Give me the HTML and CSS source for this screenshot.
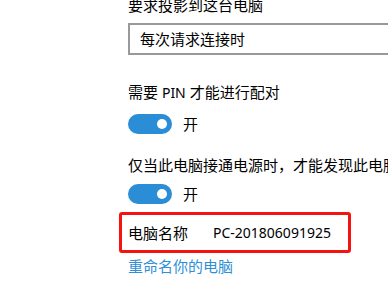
FILE: index.html
```html
<!DOCTYPE html>
<html lang="zh-CN">
<head>
    <meta charset="UTF-8">
    <meta name="viewport" content="width=device-width, initial-scale=1.0">
    <title>投影到此电脑</title>
    <link rel="stylesheet" href="styles.css">
</head>
<body>

<div class="settings">
    <div class="label title">要求投影到这台电脑</div>
    <div class="select">每次请求连接时</div>

    <div class="label pinLabel">需要 <span class="latin">PIN</span> 才能进行配对</div>
    <div class="toggleRow">
        <div class="toggle"><span class="knob"></span></div>
        <div class="state">开</div>
    </div>

    <div class="label powerLabel">仅当此电脑接通电源时，才能发现此电脑</div>
    <div class="toggleRow">
        <div class="toggle"><span class="knob"></span></div>
        <div class="state">开</div>
    </div>

    <div class="nameRow">
        <div class="nameKey">电脑名称</div>
        <div class="nameValue latin">PC-201806091925</div>
    </div>
    <a class="rename" href="#">重命名你的电脑</a>
</div>

</body>
</html>
```

FILE: styles.css
```css
body {
    font-family: "Noto Sans", "Noto Sans CJK SC", sans-serif;
    font-size: 15px;
    line-height: 20px;
    color: #000;
    background: #fff;
    margin: 0;
    padding: 0;
    overflow: hidden;
}
.latin {
    font-size: 14px;
}
.settings {
    padding-left: 128px;
    margin-top: -5px;
    display: flex;
    flex-direction: column;
    align-items: flex-start;
}
.label {
    white-space: nowrap;
}
.select {
    width: 296px;
    height: 32px;
    box-sizing: border-box;
    border: 2px solid #999;
    padding-left: 10px;
    line-height: 28px;
    margin-top: 8px;
    white-space: nowrap;
}
.pinLabel {
    margin-top: 27px;
}
.powerLabel {
    margin-top: 21px;
}
.toggleRow {
    display: flex;
    align-items: center;
    gap: 11px;
    margin-top: 11px;
}
.powerLabel + .toggleRow {
    margin-top: 9px;
}
.toggle {
    width: 44px;
    height: 20px;
    border-radius: 10px;
    background: #2b8dd5;
    display: flex;
    align-items: center;
    justify-content: flex-end;
    padding-right: 5px;
    box-sizing: border-box;
}
.knob {
    width: 10px;
    height: 10px;
    border-radius: 50%;
    background: #fff;
}
.nameRow {
    display: flex;
    align-items: center;
    width: 232px;
    box-sizing: border-box;
    margin-top: 8px;
    margin-left: -9px;
    padding: 8px 6px 7px;
    border: 3px solid #f5120f;
    border-radius: 3px;
}
.nameKey {
    width: 85px;
}
.rename {
    margin-top: 3px;
    color: #2f8fd6;
    text-decoration: none;
}
```
